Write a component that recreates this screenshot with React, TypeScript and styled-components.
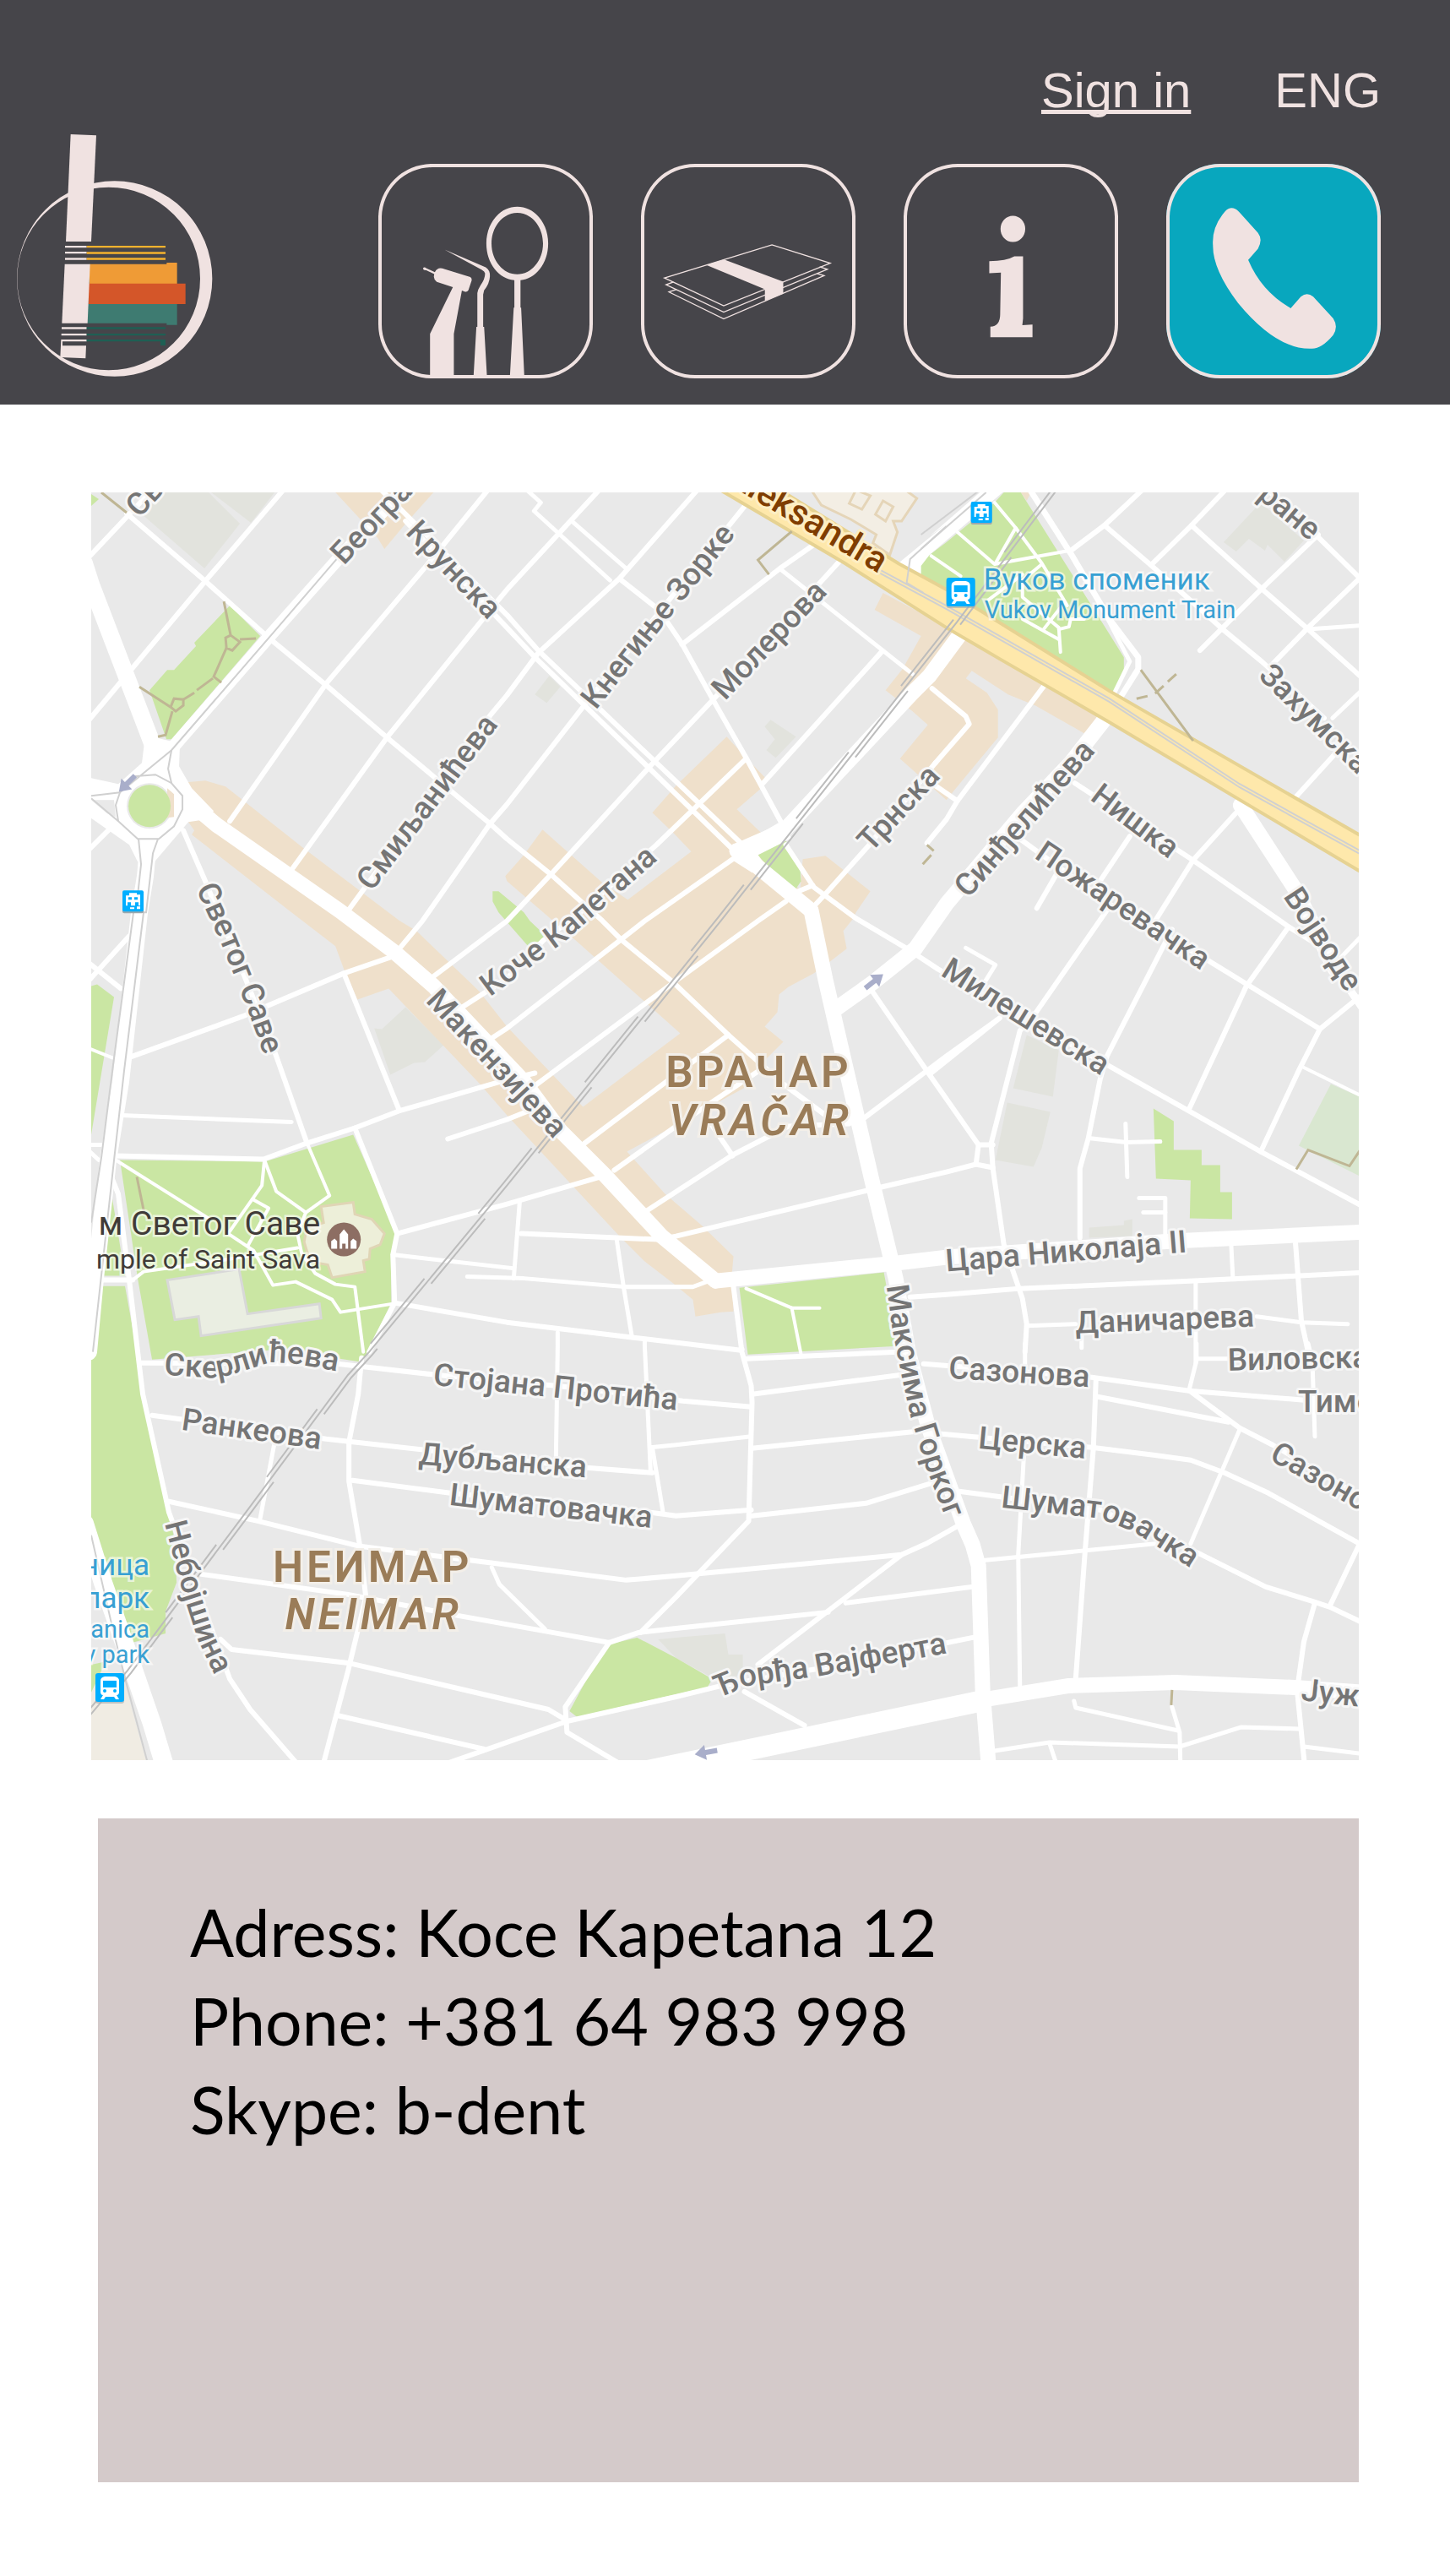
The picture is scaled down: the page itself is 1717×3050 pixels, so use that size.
import React from 'react';
import styled, { createGlobalStyle } from 'styled-components';

const ink = '#46454a';
const blush = '#f0e2e1';

const GlobalStyle = createGlobalStyle`
  *, *::before, *::after { box-sizing: border-box; }
  body { margin: 0; background: #ffffff; }
`;

/* ---------- page parts ---------- */

const Header = styled.header`
  background: ${ink};
  color: ${blush};
  padding: 73px 82px 31px 18px;
`;

const Account = styled.div`
  display: flex;
  justify-content: flex-end;
  gap: 99px;
  padding-bottom: 17px;
  font: 58px/68px 'Liberation Sans', Arial, sans-serif;
`;

const SignIn = styled.a`
  color: inherit;
  text-decoration: underline;
  text-decoration-thickness: 5px;
  text-decoration-skip-ink: none;
`;

const Language = styled.button`
  border: 0;
  padding: 0;
  background: none;
  color: inherit;
  font: inherit;
  cursor: pointer;
`;

const Bar = styled.div`
  display: flex;
  align-items: flex-end;
  justify-content: space-between;
`;

const Home = styled.a`
  display: block;
  width: 236px;
  height: 290px;
  svg { display: block; width: 100%; height: 100%; }
`;

const Nav = styled.nav`
  display: flex;
  gap: 57px;
`;

const Tile = styled.a<{ $active?: boolean }>`
  display: block;
  width: 254px;
  height: 254px;
  border-radius: 64px;
  background: ${(p) => (p.$active ? '#08a7be' : 'transparent')};
  box-shadow: inset 0 0 0 4px ${blush};
  svg { display: block; width: 100%; height: 100%; fill: ${blush}; }
`;

const Main = styled.main`
  padding: 104px 108px 112px;
`;

const MapFigure = styled.figure`
  margin: 0 0 69px;
  svg { display: block; width: 100%; height: auto; font-family: Roboto, 'Noto Sans', sans-serif; }
`;

const Card = styled.address`
  min-height: 786px;
  margin-left: 8px;
  padding: 82px 109px;
  background: #d4caca;
  color: #000000;
  font: normal 77px/105px Lato, 'Open Sans', sans-serif;
`;

const Line = styled.p`
  margin: 0;
`;

/* ---------- logo and icons ---------- */

const Logo = () => (
  <svg viewBox="54 54 708 870" preserveAspectRatio="none" aria-hidden="true">
    <path
      fill={blush}
      fillRule="evenodd"
      d="M60 570a347 347 0 1 1 694 0a347 347 0 1 1 -694 0ZM61 570a325 325 0 1 0 650 0a325 325 0 1 0 -650 0Z"
    />
    <path fill={blush} d="M251 57L342 61L324 438H234Z" />
    <path fill={ink} d="M222 438H330V518H222Z" />
    <path fill={blush} d="M231 453H308V460H231ZM231 474H308V481H231ZM231 496H308V503H231Z" />
    <path fill="#f5b22e" d="M308 453H588V460H308ZM308 475H588V482H308ZM308 496H588V503H308Z" />
    <path fill="#ef9b36" d="M318 518H592V513H629V588H318Z" />
    <path fill="#d45629" d="M314 587H659V660H314Z" />
    <path fill="#3e7b71" d="M311 660H629V734H592V728H311Z" />
    <path fill={blush} d="M230 518H320L311 728H220Z" />
    <path fill={blush} d="M219 742H308V749H219ZM218 765H308V772H218ZM217 786H308V793H222V808H306L304 853L214 849Z" />
    <path fill="#1f5f54" d="M308 742H588V749H308ZM308 765H588V772H308ZM308 786H588V807H570V793H308Z" />
  </svg>
);

const ToolsIcon = () => (
  <svg viewBox="0 0 255 255" aria-hidden="true">
    <g transform="translate(-17 -13) scale(.3827 .3333)">
      <path d="M205 800V645L276 479L226 460Q216 450 217 440L218 432L192 418Q184 420 183 412Q187 404 193 411L220 425Q228 408 243 412L330 443Q336 447 334 456L324 490Q320 497 314 495L304 491L279 645V800Z" />
      <path d="M250 345L378 408Q392 418 391 440Q390 465 373 490L370 505V620H373L382 800H340L349 620H352V500Q353 488 362 472Q376 450 376 430Q375 422 366 417Z" />
      <path
        fillRule="evenodd"
        d="M476 192C530 192 572 250 572 323C572 396 532 450 486 454V552H488L498 800H453L465 552H467V454C420 450 380 396 380 323C380 250 422 192 476 192ZM476 214C432 214 396 262 396 323C396 384 432 433 476 433C520 433 556 384 556 323C556 262 520 214 476 214Z"
      />
    </g>
  </svg>
);

const MoneyIcon = () => (
  <svg viewBox="0 0 255 255" aria-hidden="true">
    <g transform="translate(-328 -13) scale(.3827 .3333)">
      <g fill="none" stroke={blush} strokeWidth="4">
        <path d="M930 446L1264 328L1445 393L1114 545Z" />
        <path d="M958 460L935 470L1114 568L1436 415L1412 406" />
        <path d="M968 487L944 496L1114 592L1426 438L1404 430" />
      </g>
      <path d="M1060 400L1115 380L1299 459V502L1242 528V486Z" />
    </g>
  </svg>
);

const InfoIcon = () => (
  <svg viewBox="0 0 255 255" aria-hidden="true">
    <g transform="translate(-29 -133) scale(.4318 .3333)">
      <ellipse cx="368" cy="631" rx="34" ry="47" />
      <path d="M303 746Q350 746 372 729H396V950L394 974L422 972V1017H306V980Q333 978 333 935L335 787L303 789Z" />
    </g>
  </svg>
);

const PhoneIcon = () => (
  <svg viewBox="0 0 255 255" aria-hidden="true">
    <g transform="translate(-340 -133) scale(.4318 .3333)">
      <path d="M949 569Q967 544 987 569L1040 645Q1054 669 1040 702L1013 742Q1050 855 1130 914L1158 873Q1175 855 1192 873L1247 950Q1262 980 1247 1010Q1213 1062 1185 1058Q1090 1060 985 895Q915 775 916 690Q912 625 949 569Z" />
    </g>
  </svg>
);

/* ---------- map ---------- */

/* The map is surveyed in sheets; each one turns its own points into map units. */
type Sheet = (points: string) => string;
const sheet =
  (left: number, top: number, unit = 3): Sheet =>
  (points) =>
    points
      .split(' ')
      .map((pair) => {
        const [x, y] = pair.split(',').map(Number);
        return `${Math.round(x / unit + left)},${Math.round(y / 3 + top)}`;
      })
      .join(' ');

const nw = sheet(-8, -13);
const n = sheet(492, -13);
const ne = sheet(992, -13);
const w = sheet(-8, 497);
const c = sheet(492, 497);
const e = sheet(992, 497);
const sw = sheet(-8, 1007, 2.24);
const se = sheet(692, 1007, 1.912);
const join = (...parts: string[]) => parts.join(' ');

const sand = '#efe0cb';
const park = '#cae6a3';
const plot = '#e2e3dd';

const areas: [string, string][] = [
  [plot, nw('285,38 440,38 552,150 425,310 200,115')],
  [plot, nw('450,38 675,38 590,148')],
  [plot, n('150,690 190,730 140,785 100,755')],
  [plot, n('935,845 1025,905 955,980 920,955 950,915 915,870')],
  [plot, ne('1045,215 1090,250 1135,205 1190,245 1200,225 1260,285 1330,210 1175,75')],
  [plot, w('1030,410 1055,415 1140,335 1275,470 1210,530 1170,535 1085,575')],
  [plot, e('345,435 460,490 438,655 297,625')],
  [plot, e('275,675 428,708 400,835 370,903 235,880')],
  [plot, e('567,1120 690,1110 690,1095 720,1090 720,1150 567,1155')],
  [plot, join(sw('1520,1050 1568,1045'), se('110,1030 118,1105 152,1105 152,1180 80,1185'), sw('1568,1115'))],
  [sand, nw('890,38 1240,38 1140,150 1065,240 1040,200')],
  [
    sand,
    join(
      nw('360,1068 430,1062 500,1082 775,1300 1120,1560'),
      w('1180,65 1400,280'),
      c('0,405 270,690 615,430 240,95'),
      n('0,1420'),
      nw('1495,1400 1560,1325'),
      n('125,1237 340,1425 430,1485 655,1315 595,1250 515,1175 600,1080 780,905 850,980 915,1050 905,1085 815,1165 905,1250 890,1320 1040,1450 1050,1340 1130,1330 1290,1455 1240,1530'),
      c('1230,20 1195,65 1205,130 1140,180 1090,215 1000,265 965,290 960,355 915,405 980,460 900,540 840,625 425,850 560,1000 690,1110 805,1220 798,1290 805,1415 760,1420 670,1435 660,1375 595,1320 490,1240 400,1150 120,850 0,720'),
      w('1405,610 1080,270 970,310 920,200 890,120 735,0'),
      nw('380,1255 390,1240 370,1210'),
    ),
  ],
  [
    sand,
    join(
      n('1335,395 1560,515'),
      ne('600,835 550,895 375,795 280,755 150,672 130,700 205,750 243,810 243,910 85,1100 60,1130'),
      n('1395,985 1495,865 1440,815 1385,775 1345,740 1405,665 1470,550 1305,455'),
    ),
  ],
  [sand, ne('325,38 360,38 345,70')],
  [park, nw('25,45 50,62 25,88')],
  [park, nw('515,440 625,550 310,915 290,915 232,740 295,668 318,668 395,585 390,572')],
  [park, join(nw('1450,1455 1470,1455 1560,1530'), c('80,30 135,80 130,95 75,120'), w('1470,0'), nw('1450,1490'))],
  [park, n('890,1325 990,1275 1040,1380 1045,1420 1020,1455 930,1370')],
  [park, join(ne('265,38 325,38 690,625 690,690 650,755 60,395'), n('1450,325 1475,280 1560,215'), ne('230,75'))],
  [park, w('25,262 45,255 105,300 25,790')],
  [park, join(w('125,880 640,885 955,788 1110,1140 1090,1215 1090,1385 1005,1560'), sw('735,65 520,20 180,58'), w('190,1300'))],
  [park, w('95,1000 145,1290 25,1290')],
  [park, join(w('50,1325 145,1325 185,1560'), sw('150,180 215,560 240,700 245,850 215,950 215,1030 110,1068 60,870 18,640'), w('25,1500'))],
  [park, join(c('825,1333 1338,1278 1385,1540'), se('500,8 163,40'))],
  [park, e('795,695 867,742 867,843 967,843 967,897 1032,897 1032,994 1074,994 1074,1088 924,1086 926,952 805,945')],
  ['#d9e7d0', e('1425,608 1526,655 1526,935 1310,828')],
  [park, join(sw('1285,1305 1380,1070 1465,1045 1568,1115'), se('82,1190 70,1220 0,1245'), sw('1305,1325'))],
  [park, sw('18,1240 18,1140 50,1130 60,1180')],
  ['#f0ece3', sw('18,1240 50,1150 105,1200 165,1490 18,1490')],
];

const outlined: [string, string, string][] = [
  ['#f3eee4', '#e5d5b8', n('1075,20 1115,85 1220,135 1310,190 1300,220 1360,260 1385,180 1370,140 1400,140 1455,60 1400,20')],
  ['#f3eee4', '#e5d5b8', n('1240,30 1290,50 1260,98 1215,78')],
  ['#f3eee4', '#e5d5b8', n('1335,70 1370,90 1345,142 1308,118')],
  ['#edefd9', '#e0d5b5', w('840,1045 955,1030 960,1070 1020,1090 1065,1140 1050,1180 1015,1195 1010,1230 990,1235 995,1275 880,1295 865,1250 800,1240 780,1170 790,1120 850,1100')],
  ['#eaeee2', '#d8d8d8', w('295,1305 550,1265 580,1425 835,1390 840,1440 415,1503 405,1435 320,1445')],
];

const avenue = 18;
const street = 6;
const path = 4;

const roads: [number, string][] = [
  [20, nw('0,290 25,365 245,945')],
  [15, nw('270,1000 320,935 660,545 900,275 1130,30')],
  [avenue, join(nw('340,1110 470,1220 905,1525'), w('1100,140 1240,260 1560,600'), c('190,775 350,935 550,1150 740,1308'))],
  [avenue, join(c('740,1308 1380,1245'), e('60,1225 860,1168 1550,1135'))],
  [avenue, join(n('815,1310 880,1360 1080,1525'), c('1130,240 1165,385 1300,965 1380,1300'), se('525,30 570,290 650,640 672,715 685,790 695,1240 708,1500'))],
  [avenue, join(n('820,1312 985,1240 1180,1030 1440,750 1500,690'), ne('112,540'))],
  [avenue, join(c('1165,345 1300,250 1450,130'), ne('60,1500 330,1180 500,1000 618,848'))],
  [avenue, join(ne('1105,1150 1300,1450'), e('1440,200'))],
  [9, e('1400,140 1550,360')],
  [avenue, se('690,1267 890,1215 1130,1203 1400,1222 1560,1240')],
  [25, se('-60,1515 190,1434 690,1270')],
  [20, join(nw('228,1270 215,1400'), w('195,0 128,600 85,880 40,1300 15,1560'))],
  [22, sw('0,640 50,850 110,1080 180,1350 212,1500')],
  [street, join(nw('150,115 430,355 655,555 860,725 1075,910 1440,1215'), n('0,1270 155,1395 340,1560'), c('405,95 590,250 785,435 980,610 1130,720 1240,745'))],
  [street, nw('0,285 155,120 250,20')],
  [street, nw('715,20 430,355 10,855')],
  [street, nw('10,1315 85,1240')],
  [street, nw('1440,20 1205,310 860,715 515,1205')],
  [street, join(n('335,20 0,385'), nw('1470,420 1075,910 740,1370'))],
  [street, join(n('685,20 400,345 110,610 0,760'), nw('1440,830 935,1525'))],
  [street, join(n('850,80 280,790 0,1145'), nw('1440,1215 1200,1560'), w('1125,120'))],
  [street, join(n('1185,280 735,770 520,1000 155,1395 0,1560'), w('1230,235'))],
  [street, join(nw('1045,20 1500,475'), n('110,600 845,1300'))],
  [street, join(nw('1140,140 1500,520'), n('100,625 815,1320'))],
  [5, n('60,20 120,75 95,105 365,350')],
  [5, n('235,145 420,305')],
  [street, n('400,345 540,455 620,575 730,770 850,980 985,1230')],
  [street, n('1090,225 970,310 620,580')],
  [5, n('975,315 1440,685')],
  [street, n('1330,605 910,1070')],
  [street, join(n('850,985 530,1290 260,1530'), c('130,100 0,235'), w('1340,335'))],
  [street, join(n('800,1340 490,1560'), c('405,95 0,410'), w('1440,450'))],
  [street, join(n('990,1490 890,1560'), c('590,250 100,615'))],
  [street, c('785,435 275,820')],
  [street, c('890,565 600,760 380,915')],
  [street, c('1215,750 1000,760 800,860 500,1055')],
  [street, c('720,745 800,865')],
  [street, join(c('1270,730'), e('60,510 250,375'))],
  [street, join(c('1295,280 1500,575'), e('175,825 225,825'))],
  [street, e('175,825 165,895 225,905')],
  [street, join(e('165,895'), c('1560,920 1330,975 600,1150 540,1160 50,1140'))],
  [street, join(n('990,1290 1090,1440 1240,1550'), c('1415,125 1530,200'), e('640,545 920,705 1175,850 1550,1050'))],
  [street, n('1020,1460 1085,1435')],
  [street, n('1090,1510 1130,1465 1280,1295 1520,1000')],
  [street, ne('20,1000 140,860 130,835 10,735')],
  [street, join(n('1490,1285 1560,1200'), ne('100,1135 410,720'))],
  [street, ne('20,1080 100,1135')],
  [7, ne('350,20 500,255 640,490 740,625 740,665 675,770')],
  [5, ne('625,470 712,640 655,755')],
  [street, ne('500,245 620,155 765,20')],
  [street, ne('620,155 790,300 1040,525 1180,640 1400,840')],
  [street, ne('1060,20 930,155 790,295')],
  [street, ne('930,155 1180,380 1345,525 1550,712')],
  [street, ne('960,600 1040,520 1180,380 1380,190')],
  [street, ne('1200,30 1370,190 1550,365')],
  [street, ne('1550,320 1345,520 1220,645')],
  [5, ne('1345,525 1550,510')],
  [street, ne('1295,1125 1445,960')],
  [5, ne('1430,840 1550,725')],
  [street, ne('1085,1180 935,1345 800,1560')],
  [street, e('860,60 630,510 605,590 565,800 535,910 535,1155')],
  [street, join(ne('515,1070 930,1340 1245,1560'), e('1275,50 1400,130'))],
  [street, e('1275,50 1125,260 920,700')],
  [street, join(ne('320,1270 640,1500'), e('990,170 1385,415 1310,560 1175,850'))],
  [street, e('1385,415 1550,280')],
  [path, e('1320,545 1550,660')],
  [street, ne('710,1260 590,1440')],
  [street, ne('460,1380 380,1515')],
  [street, e('640,-20 380,350 320,420 220,820 225,910 265,1180 330,1370 345,1460 340,1560')],
  [5, e('130,125 235,185 195,250')],
  [street, e('250,375 5,570')],
  [5, e('565,800 700,815 820,812')],
  [5, e('695,750 703,940')],
  [5, e('745,1015 838,1015 838,1150')],
  [5, e('760,1065 838,1065')],
  [street, join(c('1430,1365 1560,1355'), e('320,1335 940,1308 1550,1277'))],
  [5, e('1070,1180 1078,1300')],
  [street, e('1300,1170 1320,1450 1345,1560')],
  [5, e('945,1310 945,1600')],
  [5, e('345,1468 520,1462')],
  [5, e('1160,1435 1320,1455 1485,1460')],
  [5, e('540,1500 540,1545')],
  [5, e('1460,160 1550,65')],
  [street, w('10,250 160,85')],
  [street, w('10,175 130,270')],
  [path, w('10,480 100,515')],
  [street, w('155,515 560,370 920,215 1095,155')],
  [street, w('920,215 1115,700')],
  [street, join(nw('350,1240 430,1420'), w('570,230 680,510 790,815'))],
  [path, w('790,815 870,1005 785,1065 755,1140 770,1210 820,1280 890,1320 960,1328 990,1560')],
  [5, w('130,720 735,745')],
  [street, w('110,865 635,875 790,820 960,765 1115,705 1500,595 1600,570')],
  [street, join(w('1290,803 1500,735'), c('90,700'))],
  [street, w('960,765 1110,1140 1095,1215 1100,1385 1010,1560')],
  [street, join(w('1110,1140 1500,1035'), c('330,940'))],
  [5, w('1095,1215 1520,1262')],
  [5, w('1545,1030 1525,1300')],
  [5, join(w('1360,1292 1560,1300'), c('420,1330 660,1328 740,1300'))],
  [street, join(w('1100,1385 1500,1455'), c('450,1510 830,1555'), se('150,20'))],
  [5, c('390,1165 415,1330 445,1510')],
  [5, join(c('180,1490 180,1540'), sw('1250,400'))],
  [5, join(c('490,1520 490,1540'), sw('1500,455'))],
  [street, join(c('805,1330 835,1560'), se('170,150 172,210 165,630 0,900'), sw('1475,1025'))],
  [path, c('850,1335 1010,1405 1110,1405')],
  [path, c('1010,1405 1045,1570')],
  [path, w('640,880 630,970 510,1140 600,1200 640,1270 670,1322 750,1310 880,1375 910,1420 1095,1388')],
  [path, w('640,880 680,990 785,1065')],
  [path, w('600,1020 655,1050 580,1185')],
  [path, w('110,880 440,1085')],
  [path, w('170,1305 210,1275 480,1235 755,1190')],
  [street, w('25,1305 170,1305')],
  [street, join(w('95,940 120,1000 160,1305 190,1560'), sw('155,180 225,600 320,950 385,1190 440,1300 570,1500'))],
  [5, w('10,825 60,825')],
  [5, w('10,840 50,880')],
  [street, join(sw('150,68 670,72 930,110 1250,150 1500,190'), se('15,203 170,225'))],
  [street, sw('180,255 640,340 1330,440 1505,460')],
  [street, sw('735,50 725,180 702,350 702,490 730,720 745,900 700,1160 632,1500')],
  [5, sw('505,350 465,620')],
  [street, join(sw('225,560 460,630 730,720 1030,770 1435,840'), se('0,825 510,750 565,710 640,645'))],
  [street, join(sw('710,485 970,530 1500,600'), se('0,612 170,592'))],
  [5, join(sw('1500,370'), se('0,360 170,330'))],
  [5, sw('1505,370 1535,605')],
  [street, join(sw('310,820 700,890 990,965 1390,1062 1470,1025'), se('0,1012 345,955'))],
  [5, sw('1080,795 1100,855 1220,1015')],
  [street, sw('1390,1062 1275,1290 1280,1380 1430,1500')],
  [street, join(sw('940,1500 1280,1340 1568,1255'), se('110,1212 340,1150 680,1040'))],
  [street, sw('670,1320 1060,1440')],
  [street, sw('360,1050 390,1085 700,1135 1230,1300 1275,1335')],
  [street, se('160,55 500,30')],
  [street, se('172,180 510,110')],
  [street, se('172,372 545,312')],
  [street, se('172,612 430,568 580,495')],
  [street, se('510,750 185,1140')],
  [street, se('385,920 670,865')],
  [street, se('155,1235 290,1355')],
  [street, se('560,72 940,120 1160,168 1420,200')],
  [street, se('950,125 945,370 925,740 905,1190')],
  [street, se('955,190 1250,280')],
  [street, se('1165,170 1275,300 1350,360 1570,560')],
  [5, se('1275,305 1165,710')],
  [street, se('600,320 940,370 1080,395 1165,415 1240,460 1340,530 1546,710 1480,930')],
  [street, se('640,525 960,590 1190,750 1335,865 1440,915 1480,935 1560,995')],
  [5, se('690,770 1085,710')],
  [5, se('788,380 775,750 778,1215')],
  [5, se('790,0 790,75')],
  [5, se('1178,0 1178,60 1160,168')],
  [5, se('1180,53 1250,55')],
  [5, se('1430,0 1440,60 1445,330')],
  [street, se('1445,920 1420,1060 1405,1230 1423,1500')],
  [5, se('900,1270 905,1292 1135,1375')],
  [5, se('1122,1290 1140,1380 1142,1500')],
  [5, se('720,1445 845,1415 1140,1430 1280,1362 1410,1368')],
  [5, se('845,1420 862,1500')],
  [5, se('1420,1432 1560,1457')],
  [path, ne('230,75 305,165 235,290')],
  [path, ne('100,180 230,295 395,265 495,245')],
  [path, ne('5,265 110,335')],
  [path, ne('305,165 400,290 490,440')],
  [path, ne('400,295 330,350 330,410 460,520 465,605')],
  [path, ne('330,490 460,560')],
  [path, ne('405,525 480,430')],
  [path, ne('210,420 330,330')],
  [path, ne('460,525 495,515 500,490 550,490')],
];

const boulevard = join(
  n('740,20 1200,290 1560,518'),
  ne('250,630 640,855 1550,1398 1550,1268 640,745 60,385'),
  n('1390,290 955,20'),
);

const tramLines = [
  join(n('1300,300 1560,440'), ne('640,770 1100,1075 1550,1322')),
  join(n('1300,312 1560,452'), ne('640,782 1100,1087 1550,1334')),
  n('1560,160 1430,275 1420,360 1480,395'),
  ne('-30,240 200,38'),
  ne('-30,190 180,30'),
  nw('175,1048 252,1040 310,1072 347,1115 347,1165 318,1225 265,1268 190,1268 120,1205 112,1150 125,1105 310,955 660,550 900,270'),
  nw('25,1115 125,1103'),
  nw('25,1125 120,1205'),
  nw('310,955 298,1020 310,1072'),
  join(nw('193,1268 202,1360 190,1470'), w('175,0 102,540 60,870 25,1100')),
  join(nw('262,1268 243,1320 220,1530'), w('210,0 140,560 105,880 30,1560')),
  sw('18,680 70,980 110,1200 168,1490'),
];

const footpaths = [
  nw('60,38 150,110'),
  nw('495,425 520,545 500,555 505,590 525,600 552,570 520,545'),
  nw('552,562 610,557'),
  nw('505,590 460,692 485,715'),
  nw('195,730 305,800 318,770 350,775 350,795 325,815 305,800'),
  nw('350,775 390,750'),
  nw('400,740 455,700'),
  nw('312,815 288,900 262,907'),
  n('1010,178 890,280 930,330'),
  n('1490,1290 1515,1310'),
  n('1505,1325 1475,1360'),
  ne('750,668 935,920'),
  ne('875,683 845,712'),
  ne('830,725 800,752'),
  ne('773,762 735,772'),
  w('185,940 212,1070'),
  e('1302,912 1345,843 1490,900 1550,810'),
  se('1122,1230 1121,1285'),
];

const railway = join(ne('460,20 95,500'), n('1380,775 960,1305 760,1560'), c('0,970'), w('1010,1560'), sw('700,110 440,580 115,1160 10,1330'));

type Street = { name: string; path: string; end?: boolean; tone?: 'boulevard' };
const streets: Street[] = [
  { name: 'Св', path: nw('195,132 345,-30') },
  { name: 'Београ', path: nw('922,300 1230,-27') },
  { name: 'Крунска', path: nw('1136,183 1500,563') },
  { name: 'Смиљанићева', path: nw('1021,1459 1530,785') },
  { name: 'Светог Саве', path: w('396,-85 486,110 586,360 660,570') },
  { name: 'Кнегиње Зорке', path: n('315,813 880,105') },
  { name: 'Молерова', path: n('775,779 1195,339') },
  { name: 'Трнска', path: n('1293,1321 1600,988') },
  { name: 'Коче Капетана', path: c('-59,301 199,109 620,-260') },
  { name: 'Макензијева', path: w('1209,315 1740,885') },
  { name: 'Aleksandra', path: n('540,-134 1319,328'), end: true, tone: 'boulevard' },
  { name: 'ране', path: ne('1041,-44 1350,214'), end: true },
  { name: 'Захумска', path: ne('1163,692 1640,1162') },
  { name: 'Синђелићева', path: ne('138,1483 660,880') },
  { name: 'Нишка', path: ne('567,1127 920,1395') },
  { name: 'Пожаревачка', path: ne('368,1335 1060,1800') },
  { name: 'Милешевска', path: e('35,222 700,636') },
  { name: 'Војводе', path: e('1255,-58 1580,440') },
  { name: 'Цара Николаја II', path: e('60,1275 980,1200') },
  { name: 'Даничарева', path: e('518,1495 1220,1466') },
  { name: 'Виловска', path: se('1248,97 1700,82') },
  { name: 'Тимочка', path: se('1408,243 1800,243') },
  { name: 'Сазонова', path: se('615,122 980,160') },
  { name: 'Церска', path: se('682,372 980,418') },
  { name: 'Шуматовачка', path: se('735,582 960,622 1040,672 1180,812') },
  { name: 'Сазонова', path: se('1340,412 1700,728') },
  { name: 'Максима Горког', path: join(c('1348,1325 1368,1480'), se('508,100 532,265 566,440 630,700')) },
  { name: 'Стојана Протића', path: sw('922,148 1660,248') },
  { name: 'Дубљанска', path: sw('885,430 1400,482') },
  { name: 'Шуматовачка', path: sw('966,572 1580,665') },
  { name: 'Скерлићева', path: sw('210,112 345,124 390,112 495,66 560,72 720,112') },
  { name: 'Ранкеова', path: sw('255,305 700,390') },
  { name: 'Небојшина', path: sw('212,638 245,800 262,890 300,1050 375,1260') },
  { name: 'Ђорђа Вајферта', path: se('98,1258 165,1215 330,1178 680,1080') },
  { name: 'Јужни', path: se('1413,1266 1640,1306') },
];

const StreetText = styled.text<{ $tone?: Street['tone'] }>`
  font-size: ${(p) => (p.$tone ? 42 : 37)}px;
  font-weight: 500;
  fill: ${(p) => (p.$tone ? '#7f3d00' : '#757575')};
  stroke: ${(p) => (p.$tone ? '#fdeec4' : '#f6f6f6')};
  stroke-width: 6px;
  stroke-linejoin: round;
  paint-order: stroke;
`;

const placeSizes = { title: 39, subtitle: 32, station: 35, stationLatin: 29 };

const PlaceText = styled.text<{ $color: string; $size: keyof typeof placeSizes; $end?: boolean }>`
  font-size: ${(p) => placeSizes[p.$size]}px;
  fill: ${(p) => p.$color};
  stroke: #ffffff;
  stroke-opacity: 0.6;
  stroke-width: 5px;
  paint-order: stroke;
  text-anchor: ${(p) => (p.$end ? 'end' : 'start')};
`;

const DistrictText = styled.text<{ $latin?: boolean }>`
  font-size: 51px;
  font-weight: 600;
  font-style: ${(p) => (p.$latin ? 'italic' : 'normal')};
  letter-spacing: 4px;
  text-anchor: middle;
  fill: #9a7c58;
  stroke: #f3efe9;
  stroke-width: 6px;
  paint-order: stroke;
`;

const azure = '#00aeff';
const stationBlue = '#38a0d3';

const TramStop = ({ x, y }: { x: number; y: number }) => (
  <g transform={`translate(${x} ${y})`}>
    <rect y="2" width="25" height="25" rx="2" fill="#9aa7ad" />
    <rect width="25" height="25" rx="2" fill={azure} />
    <path fill="#fff" d="M8 3h9v2h4v13h-2v-4h-4v4h-5v-4h-4v4H4V6h4Z" />
    <path fill={azure} d="M7 8h4v3H7ZM14 8h4v3h-4Z" />
    <path fill="#fff" d="M9 20h5v2H9ZM17 19h4v3h-4Z" />
  </g>
);

const TrainStation = ({ x, y }: { x: number; y: number }) => (
  <g transform={`translate(${x} ${y})`}>
    <rect y="2" width="34" height="34" rx="3" fill="#9aa7ad" opacity=".6" />
    <rect width="34" height="34" rx="3" fill={azure} />
    <path fill="#fff" d="M11 4h12q5 1 5 5v13q0 4-3 4l3 5h-4l-2-3H12l-2 3H6l3-5q-3 0-3-4V9q0-4 5-5Z" />
    <path fill={azure} d="M9 9h16v8H9Z" />
    <circle cx="11" cy="21" r="2" fill={azure} />
    <circle cx="23" cy="21" r="2" fill={azure} />
  </g>
);

const OneWay = ({ x, y, turn }: { x: number; y: number; turn: number }) => (
  <path transform={`translate(${x} ${y}) rotate(${turn})`} fill="#a9aeca" d="M-14 -3H0V-9L13 0L0 9V3H-14Z" />
);

const CityMap = () => (
  <svg viewBox="0 0 1500 1500" role="img" aria-label="Map of Vračar and Neimar">
    <rect width="1500" height="1500" fill="#e9e9e9" />
    {areas.map(([fill, points], i) => (
      <polygon key={i} fill={fill} points={points} />
    ))}
    {outlined.map(([fill, stroke, points], i) => (
      <polygon key={i} fill={fill} stroke={stroke} strokeWidth="3" points={points} />
    ))}
    <polygon
      fill="#fff"
      points={nw('10,1050 120,1075 205,1000 215,900 340,930 335,1010 380,1090 460,1170 430,1200 370,1210 300,1290 250,1350 190,1350 160,1290 10,1185')}
    />
    <polygon fill="#fff" points={join(n('1390,290 1560,150'), ne('0,195 190,30 270,30 0,262'), n('1470,300 1470,330'))} />
    <polygon fill="#fff" points={n('840,1285 970,1210 1010,1265 890,1325 925,1370 870,1390 795,1340')} />
    <g fill="none" stroke="#fff" strokeLinejoin="round" strokeLinecap="round">
      {roads.map(([width, points], i) => (
        <polyline key={i} strokeWidth={width} points={points} />
      ))}
    </g>
    <polygon fill="#e9e9e9" points={nw('25,1130 105,1130 110,1190 80,1180')} />
    <circle cx="69" cy="371" r="27" fill="#e9e9e9" />
    <polygon fill={sand} points={nw('295,1090 318,1110 318,1190 295,1195')} />
    <circle cx="69" cy="371" r="25" fill={park} />
    <polygon fill="#fee8ab" stroke="#e6d292" strokeWidth="4" points={boulevard} />
    <g fill="none" stroke="#d0d0d0" strokeWidth="2">
      {tramLines.map((points, i) => (
        <polyline key={i} points={points} />
      ))}
    </g>
    <g fill="none" stroke="#bfb694" strokeWidth="3">
      {footpaths.map((points, i) => (
        <polyline key={i} points={points} />
      ))}
    </g>
    <g fill="none" stroke="#bcbcbc" strokeWidth="2">
      <polyline points={railway} />
      <polyline points={railway} transform="translate(-4 -3)" strokeDasharray="100 100" />
      <polyline points={railway} transform="translate(4 3)" strokeDasharray="100 100" strokeDashoffset="100" />
    </g>
    <OneWay x={42} y={345} turn={135} />
    <OneWay x={927} y={578} turn={-38} />
    <OneWay x={727} y={1491} turn={170} />

    {streets.map((item, i) => (
      <React.Fragment key={i}>
        <path id={`street-${i}`} d={`M${item.path.split(' ').join('L')}`} fill="none" />
        <StreetText $tone={item.tone} textAnchor={item.end ? 'end' : 'start'}>
          <textPath href={`#street-${i}`} startOffset={item.end ? '100%' : '0%'}>
            {item.name}
          </textPath>
        </StreetText>
      </React.Fragment>
    ))}

    <PlaceText $color={stationBlue} $size="station" x="1056" y="115">Вуков споменик</PlaceText>
    <PlaceText $color={stationBlue} $size="stationLatin" x="1057" y="149">Vukov Monument Train</PlaceText>
    <PlaceText $color="#403b38" $size="title" $end x="271" y="878">м Светог Саве</PlaceText>
    <PlaceText $color="#403b38" $size="subtitle" $end x="271" y="918">mple of Saint Sava</PlaceText>
    <PlaceText $color={stationBlue} $size="station" $end x="69" y="1281">ница</PlaceText>
    <PlaceText $color={stationBlue} $size="station" $end x="69" y="1320">парк</PlaceText>
    <PlaceText $color={stationBlue} $size="stationLatin" $end x="69" y="1355">anica</PlaceText>
    <PlaceText $color={stationBlue} $size="stationLatin" $end x="69" y="1385">v park</PlaceText>

    <DistrictText x="790" y="704">ВРАЧАР</DistrictText>
    <DistrictText $latin x="792" y="760">VRAČAR</DistrictText>
    <DistrictText x="333" y="1289">НЕИМАР</DistrictText>
    <DistrictText $latin x="334" y="1345">NEIMAR</DistrictText>

    <TramStop x={37} y={471} />
    <TramStop x={1041} y={11} />
    <TrainStation x={1012} y={101} />
    <TrainStation x={5} y={1397} />
    <circle cx="299" cy="884" r="20" fill="#8d6e63" />
    <path fill="#fff" d="M284 895V886L288 883L291 886V895ZM294 895V878L299 872L304 878V895H301V889H297V895ZM307 895V886L310 883L314 886V895Z" />
  </svg>
);

/* ---------- page ---------- */

export default function App() {
  return (
    <>
      <GlobalStyle />
      <Header>
        <Account>
          <SignIn href="#sign-in">Sign in</SignIn>
          <Language type="button">ENG</Language>
        </Account>
        <Bar>
          <Home href="#home" aria-label="b-dent home"><Logo /></Home>
          <Nav aria-label="Main">
            <Tile href="#services" aria-label="Services"><ToolsIcon /></Tile>
            <Tile href="#prices" aria-label="Prices"><MoneyIcon /></Tile>
            <Tile href="#about" aria-label="About"><InfoIcon /></Tile>
            <Tile href="#contact" aria-label="Contact" aria-current="page" $active><PhoneIcon /></Tile>
          </Nav>
        </Bar>
      </Header>
      <Main>
        <MapFigure><CityMap /></MapFigure>
        <Card>
          <Line>Adress: Koce Kapetana 12</Line>
          <Line>Phone: +381 64 983 998</Line>
          <Line>Skype: b-dent</Line>
        </Card>
      </Main>
    </>
  );
}
